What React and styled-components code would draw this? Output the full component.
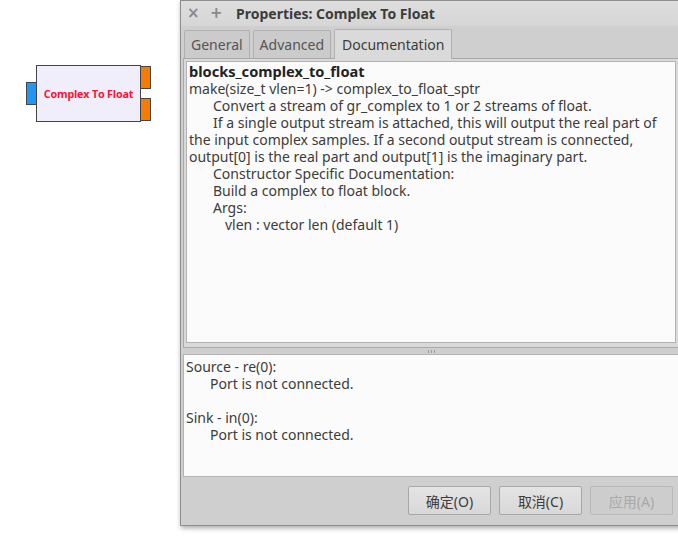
import React from 'react';
import styled, { createGlobalStyle } from 'styled-components';

const GlobalStyle = createGlobalStyle`
    html, body {
        margin: 0;
        padding: 0;
        background: #ffffff;
        overflow: hidden;
    }
    body {
        font-family: "Noto Sans", "Open Sans", sans-serif;
    }
`;

const docLines = [
    { text: 'make(size_t vlen=1) -> complex_to_float_sptr', indent: 0 },
    { text: 'Convert a stream of gr_complex to 1 or 2 streams of float.', indent: 1 },
    { text: 'If a single output stream is attached, this will output the real part of', indent: 1 },
    { text: 'the input complex samples. If a second output stream is connected,', indent: 0 },
    { text: 'output[0] is the real part and output[1] is the imaginary part.', indent: 0 },
    { text: 'Constructor Specific Documentation:', indent: 1 },
    { text: 'Build a complex to float block.', indent: 1 },
    { text: 'Args:', indent: 1 },
    { text: 'vlen : vector len (default 1)', indent: 1.5 },
];

const portLines = [
    { text: 'Source - re(0):', indent: 0 },
    { text: 'Port is not connected.', indent: 1 },
    { text: '\u00a0', indent: 0 },
    { text: 'Sink - in(0):', indent: 0 },
    { text: 'Port is not connected.', indent: 1 },
];

const App = () => {
    return (
        <Canvas>
            <GlobalStyle />

            <Block>
                <InPort />
                <BlockBody>Complex To Float</BlockBody>
                <OutPorts>
                    <OutPort />
                    <OutPort />
                </OutPorts>
            </Block>

            <Dialog>
                <TitleBar>
                    <WinButton>×</WinButton>
                    <WinButton>+</WinButton>
                    <Title>Properties: Complex To Float</Title>
                </TitleBar>

                <Content>
                    <TabRow>
                        <Tab>General</Tab>
                        <Tab>Advanced</Tab>
                        <Tab active>Documentation</Tab>
                    </TabRow>

                    <Notebook>
                        <TextView>
                            <BoldLine>blocks_complex_to_float</BoldLine>
                            {docLines.map((line, i) => (
                                <Line key={i} indent={line.indent}>{line.text}</Line>
                            ))}
                        </TextView>
                    </Notebook>

                    <PaneHandle>
                        <Grip />
                    </PaneHandle>

                    <PortView>
                        {portLines.map((line, i) => (
                            <Line key={i} indent={line.indent}>{line.text}</Line>
                        ))}
                    </PortView>

                    <ButtonBar>
                        <Button>确定(O)</Button>
                        <Button>取消(C)</Button>
                        <Button disabled>应用(A)</Button>
                    </ButtonBar>
                </Content>
            </Dialog>
        </Canvas>
    );
};

export default App;

const Canvas = styled.div`
    position: relative;
    width: 678px;
    height: 537px;
    background: #ffffff;
    overflow: hidden;
`;

const Block = styled.div`
    position: absolute;
    left: 26px;
    top: 65px;
    display: flex;
    align-items: center;
`;

const InPort = styled.div`
    width: 9px;
    height: 21px;
    background: #2196f3;
    border: 1px solid #444;
    border-right: none;
`;

const BlockBody = styled.div`
    width: 103px;
    height: 55px;
    box-sizing: content-box;
    border: 1px solid #444;
    background: #f1eefc;
    display: flex;
    align-items: center;
    justify-content: center;
    color: #ff1133;
    font-family: "Open Sans", "Noto Sans", sans-serif;
    font-weight: 700;
    font-size: 10.8px;
    letter-spacing: -0.2px;
`;

const OutPorts = styled.div`
    display: flex;
    flex-direction: column;
    gap: 9px;
`;

const OutPort = styled.div`
    width: 9px;
    height: 21px;
    background: #f57c00;
    border: 1px solid #444;
    border-left: none;
`;

const Dialog = styled.div`
    position: absolute;
    left: 180px;
    top: 0;
    width: 504px;
    height: 524px;
    background: #cfcfcf;
    border: 1px solid #8e8e8e;
    box-shadow: 1px 2px 5px rgba(0, 0, 0, 0.35);
    display: flex;
    flex-direction: column;
    color: #3c3c3c;
`;

const TitleBar = styled.div`
    height: 25px;
    display: flex;
    align-items: center;
    padding-left: 6px;
    background: linear-gradient(#dedede, #d6d6d6);
`;

const WinButton = styled.span`
    color: #8a8a8a;
    font-size: 15px;
    font-weight: 700;
    width: 23px;
    line-height: 1;
    font-family: "DejaVu Sans", sans-serif;
`;

const Title = styled.span`
    margin-left: 3px;
    font-weight: 700;
    font-size: 14px;
    color: #3c3c3c;
`;

const Content = styled.div`
    flex: 1;
    display: flex;
    flex-direction: column;
    padding: 2px 6px 0 2px;
`;

const TabRow = styled.div`
    display: flex;
    align-items: flex-end;
    gap: 3px;
    height: 30px;
    padding-left: 1px;
    border-bottom: 1px solid #a9a9a9;
`;

const Tab = styled.div`
    height: ${p => (p.active ? '30px' : '28px')};
    box-sizing: border-box;
    padding: 0 ${p => (p.active ? '7px' : '6px')};
    display: flex;
    align-items: center;
    font-size: 14px;
    color: ${p => (p.active ? '#3c3c3c' : '#555')};
    background: ${p => (p.active ? '#dadada' : '#cbcbcb')};
    border: 1px solid #b0b0b0;
    border-bottom: none;
    border-radius: 2px 2px 0 0;
    margin-bottom: ${p => (p.active ? '-1px' : '0')};
`;

const Notebook = styled.div`
    height: 289px;
    box-sizing: border-box;
    border: 1px solid #a9a9a9;
    border-top: none;
    background: #d9d9d9;
    padding: 2px 2px 4px 2px;
    display: flex;
`;

const TextView = styled.div`
    flex: 1;
    background: #fbfbfb;
    border: 1px solid #b3b3b3;
    padding: 1px 2px;
    font-size: 14px;
    line-height: 17px;
    overflow: hidden;
`;

const BoldLine = styled.div`
    font-weight: 700;
    font-size: 14.6px;
    color: #222;
`;

const Line = styled.div`
    white-space: pre;
    padding-left: ${p => p.indent * 24}px;
    color: #3c3c3c;
`;

const PaneHandle = styled.div`
    height: 6px;
    display: flex;
    justify-content: center;
    align-items: center;
`;

const Grip = styled.div`
    width: 7px;
    height: 3px;
    background: repeating-linear-gradient(90deg, #9a9a9a 0 1px, transparent 1px 3px);
`;

const PortView = styled.div`
    height: 123px;
    box-sizing: border-box;
    margin-right: -2px;
    background: #fbfbfb;
    border: 1px solid #b3b3b3;
    padding: 3px 2px;
    font-size: 14px;
    line-height: 17px;
`;

const ButtonBar = styled.div`
    flex: 1;
    display: flex;
    justify-content: flex-end;
    align-items: flex-start;
    gap: 8px;
    padding: 9px 6px 0 0;
`;

const Button = styled.div`
    width: 83px;
    height: 29px;
    box-sizing: border-box;
    border: 1px solid ${p => (p.disabled ? '#b9b9b9' : '#a8a8a8')};
    border-radius: 2px;
    background: ${p => (p.disabled ? '#cdcdcd' : 'linear-gradient(#e4e4e4, #d8d8d8)')};
    color: ${p => (p.disabled ? '#a9a9a9' : '#3c3c3c')};
    display: flex;
    align-items: center;
    justify-content: center;
    font-family: "Noto Sans", "Noto Sans CJK SC", sans-serif;
    font-size: 14px;
`;
